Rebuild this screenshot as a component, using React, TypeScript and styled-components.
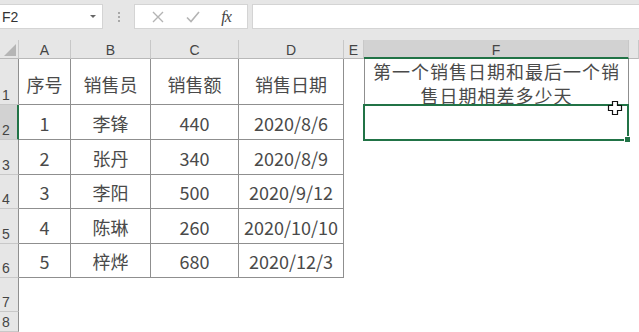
import React from 'react';
import styled, { createGlobalStyle, css } from 'styled-components';

const GlobalStyle = createGlobalStyle`
  html, body {
    margin: 0;
    padding: 0;
    background: #ffffff;
    overflow: hidden;
  }
  body {
    font-family: "Noto Sans CJK SC", "Noto Sans", sans-serif;
  }
`;

const GREEN = '#217346';
const LINE = '#8f8f8f';

const Window = styled.div`
  width: 639px;
  height: 332px;
  display: flex;
  flex-direction: column;
  background: #fff;
`;

const FormulaBar = styled.div`
  height: 40px;
  box-sizing: border-box;
  padding: 4px 0 11px;
  background: #e6e6e6;
  display: flex;
  align-items: stretch;
`;

const NameBox = styled.div`
  width: 103px;
  background: #fff;
  border: 1px solid #d4d4d4;
  border-left: none;
  box-sizing: border-box;
  display: flex;
  align-items: center;
  justify-content: space-between;
  padding: 0 6px 0 2px;
  font-family: "Liberation Sans", sans-serif;
  font-size: 14px;
  color: #333;
`;

const Caret = styled.span`
  width: 0;
  height: 0;
  border-left: 3px solid transparent;
  border-right: 3px solid transparent;
  border-top: 3px solid #666;
`;

const Grip = styled.div`
  width: 31px;
  display: flex;
  flex-direction: column;
  align-items: center;
  justify-content: center;
  gap: 2px;
  span {
    width: 2px;
    height: 2px;
    background: #a8a8a8;
  }
`;

const ButtonBox = styled.div`
  width: 114px;
  background: #fff;
  border: 1px solid #d4d4d4;
  box-sizing: border-box;
  display: flex;
  align-items: center;
  justify-content: space-around;
  padding: 0 6px;
`;

const Fx = styled.span`
  font-family: "Liberation Serif", serif;
  font-style: italic;
  font-size: 16px;
  color: #444;
  letter-spacing: -1px;
`;

const FormulaInput = styled.div`
  flex: 1;
  margin-left: 4px;
  background: #fff;
  border: 1px solid #d4d4d4;
  border-right: none;
`;

const Sheet = styled.div`
  position: relative;
  flex: 1;
  display: grid;
  grid-template-columns: 19px 52px 80px 88px 105px 20px 265px 1fr;
  grid-template-rows: 19px 46px 35px 35px 34px 35px 34px 34px 1fr;
`;

const Corner = styled.div`
  background: #e6e6e6;
  border-right: 1px solid #c8c8c8;
  border-bottom: 1px solid #b8b8b8;
  position: relative;
  &::after {
    content: '';
    position: absolute;
    right: 2px;
    bottom: 2px;
    border-left: 12px solid transparent;
    border-bottom: 12px solid #b5b5b5;
  }
`;

const ColHead = styled.div<{ $active?: boolean }>`
  background: ${(p) => (p.$active ? '#d2d2d2' : '#e6e6e6')};
  border-right: 1px solid #c8c8c8;
  border-bottom: ${(p) => (p.$active ? `2px solid ${GREEN}` : '1px solid #b8b8b8')};
  display: flex;
  align-items: center;
  justify-content: center;
  font-family: "Liberation Sans", sans-serif;
  font-size: 14px;
  color: #444;
  padding-top: 2px;
  box-sizing: border-box;
`;

const RowHead = styled.div<{ $active?: boolean }>`
  background: ${(p) => (p.$active ? '#d2d2d2' : '#e6e6e6')};
  border-right: ${(p) => (p.$active ? `2px solid ${GREEN}` : `1px solid ${LINE}`)};
  border-bottom: 1px solid #c8c8c8;
  display: flex;
  align-items: flex-end;
  padding: 0 0 1px 2px;
  box-sizing: border-box;
  font-family: "Liberation Sans", sans-serif;
  font-size: 14px;
  line-height: 16px;
  color: #444;
`;

const Cell = styled.div<{ $r?: boolean; $b?: boolean; $l?: boolean; $head?: boolean }>`
  box-sizing: border-box;
  display: flex;
  align-items: flex-end;
  justify-content: center;
  padding-bottom: ${(p) => (p.$head ? '7px' : '3px')};
  font-size: 18px;
  line-height: 26px;
  color: #4a4a4a;
  white-space: nowrap;
  ${(p) => p.$r && css`border-right: 1px solid ${LINE};`}
  ${(p) => p.$b && css`border-bottom: 1px solid ${LINE};`}
  ${(p) => p.$l && css`border-left: 1px solid ${LINE};`}
`;

const NoteCell = styled(Cell)`
  align-items: flex-start;
  padding: 0;
  line-height: 24px;
  letter-spacing: 1px;
  text-align: center;
  white-space: normal;
`;

const Selection = styled.div`
  position: absolute;
  left: 363px;
  top: 64px;
  width: 266px;
  height: 37px;
  box-sizing: border-box;
  border: 2px solid ${GREEN};
  pointer-events: none;
  &::after {
    content: '';
    position: absolute;
    right: -4px;
    bottom: -4px;
    width: 5px;
    height: 5px;
    background: ${GREEN};
    border: 1px solid #fff;
  }
`;

const Pointer = styled.svg`
  position: absolute;
  left: 607px;
  top: 60px;
`;

const columns = ['A', 'B', 'C', 'D', 'E', 'F'];

const rows: string[][] = [
  ['序号', '销售员', '销售额', '销售日期'],
  ['1', '李锋', '440', '2020/8/6'],
  ['2', '张丹', '340', '2020/8/9'],
  ['3', '李阳', '500', '2020/9/12'],
  ['4', '陈琳', '260', '2020/10/10'],
  ['5', '梓烨', '680', '2020/12/3'],
];

export default function App() {
  return (
    <Window>
      <GlobalStyle />
      <FormulaBar>
        <NameBox>
          F2
          <Caret />
        </NameBox>
        <Grip>
          <span />
          <span />
          <span />
        </Grip>
        <ButtonBox>
          <svg width="14" height="14" viewBox="0 0 14 14">
            <path d="M2 2 L12 12 M12 2 L2 12" stroke="#b4b4b4" strokeWidth="1.4" fill="none" />
          </svg>
          <svg width="16" height="14" viewBox="0 0 16 14">
            <path d="M2 7.5 L6 11.5 L14 2" stroke="#b4b4b4" strokeWidth="1.6" fill="none" />
          </svg>
          <Fx>fx</Fx>
        </ButtonBox>
        <FormulaInput />
      </FormulaBar>

      <Sheet>
        <Corner />
        {columns.map((c) => (
          <ColHead key={c} $active={c === 'F'}>
            {c}
          </ColHead>
        ))}
        <ColHead />

        {Array.from({ length: 8 }, (_, i) => {
          const data = rows[i];
          const n = i + 1;
          return (
            <React.Fragment key={n}>
              <RowHead $active={n === 2}>{n}</RowHead>
              {[0, 1, 2, 3].map((ci) => (
                <Cell key={ci} $r={!!data} $b={!!data} $head={n === 1}>
                  {data ? data[ci] : ''}
                </Cell>
              ))}
              <Cell />
              {n === 1 ? (
                <NoteCell $l $r $b>
                  第一个销售日期和最后一个销
                  <br />
                  售日期相差多少天
                </NoteCell>
              ) : (
                <Cell $l={n === 2} $r={n === 2} $b={n === 2} />
              )}
              <Cell />
            </React.Fragment>
          );
        })}

        <Selection />
        <Pointer width="16" height="16" viewBox="0 0 16 16">
          <path
            d="M5.5 1.5 H10.5 V5.5 H14.5 V10.5 H10.5 V14.5 H5.5 V10.5 H1.5 V5.5 H5.5 Z"
            fill="#fff"
            stroke="#111"
            strokeWidth="1.2"
          />
        </Pointer>
      </Sheet>
    </Window>
  );
}
